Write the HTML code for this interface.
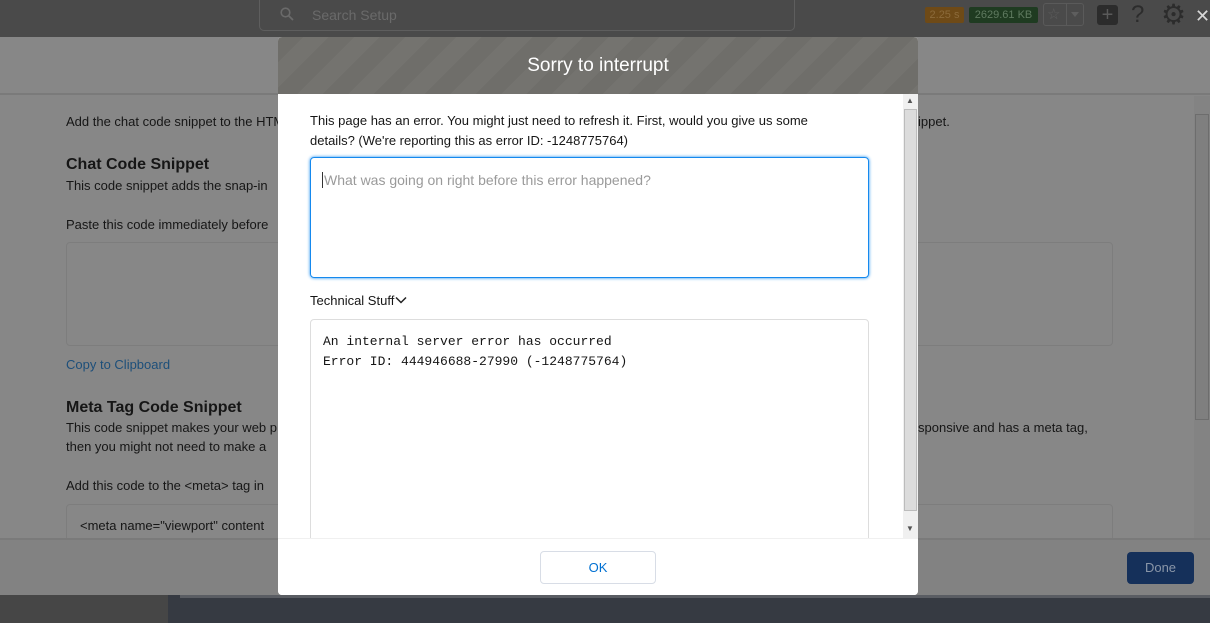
<!DOCTYPE html>
<html><head><meta charset="utf-8"><style>
*{box-sizing:border-box;margin:0;padding:0}
body{width:1210px;height:623px;overflow:hidden;position:relative;background:#878787;font-family:"Liberation Sans",sans-serif;font-size:13px;color:#161616}
.abs{position:absolute}
.top{left:0;top:0;width:1210px;height:37px;background:#4a4a4a}
.search{left:259px;top:0;width:536px;height:31px;border:1px solid #5e5e5e;border-top:none;border-radius:0 0 5px 5px;color:#6a6a6a;font-size:14px;padding:7px 0 0 52px}
.hdr{left:0;top:37px;width:1210px;height:58px;background:#878787;border-bottom:2px solid #7a7a7a}
.t{position:absolute;white-space:nowrap}
.box{position:absolute;border:1px solid #7d7d7d;border-radius:4px}
.foot{left:0;top:538px;width:1210px;height:57px;background:#828282;border-top:2px solid #7a7a7a}
.modal{left:278px;top:37px;width:640px;height:558px;background:#fff;border-radius:4px;overflow:hidden}
.mh{left:0;top:0;width:640px;height:57px;background:repeating-linear-gradient(135deg,#6f6e6a 0 18px,#74736f 18px 36px);color:#fff;font-size:19px;text-align:center;line-height:58px}
</style></head><body>
<div class="abs top"></div>
<div class="abs search"><svg class="abs" style="left:20px;top:7px" width="14" height="14" viewBox="0 0 14 14"><circle cx="5.5" cy="5.5" r="4.3" fill="none" stroke="#6a6a6a" stroke-width="1.6"/><path d="M8.7 8.7L13 13" stroke="#6a6a6a" stroke-width="1.8"/></svg>Search Setup</div>
<div class="abs" style="left:925px;top:7px;width:39px;height:16px;background:#6e4a17;border-radius:2px;color:#8b6a3a;font-size:11px;text-align:center;line-height:16px">2.25 s</div>
<div class="abs" style="left:969px;top:7px;width:69px;height:16px;background:#1f3b21;border-radius:2px;color:#5f7a60;font-size:11px;text-align:center;line-height:16px">2629.61 KB</div>
<div class="abs" style="left:1043px;top:3px;width:41px;height:23px;border:1px solid #5a5a5a;border-radius:3px"><span class="abs" style="left:3px;top:1px;color:#5e5e5e;font-size:15px">☆</span><span class="abs" style="left:22px;top:0;width:1px;height:21px;background:#5a5a5a"></span><span class="abs" style="left:27px;top:8px;border:4px solid transparent;border-top:5px solid #5e5e5e"></span></div>
<div class="abs" style="left:1097px;top:5px;width:21px;height:20px;background:#2c2c2c;border-radius:3px;color:#5a5a5a;font-size:20px;text-align:center;line-height:20px">+</div>
<div class="abs" style="left:1131px;top:1px;color:#2c2c2c;font-size:24px">?</div>
<div class="abs" style="left:1161px;top:-2px;color:#2c2c2c;font-size:28px;font-family:'DejaVu Sans',sans-serif">⚙</div>
<div class="abs" style="left:1195px;top:6px;color:#d8d8d8;font-size:18px">✕</div>
<div class="abs hdr"></div>
<div class="t" style="left:66px;top:114px">Add the chat code snippet to the HTML</div>
<div class="t" style="left:918px;top:114px">ippet.</div>
<div class="t" style="left:66px;top:156px;font-size:16px;font-weight:bold">Chat Code Snippet</div>
<div class="t" style="left:66px;top:178px">This code snippet adds the snap-in</div>
<div class="t" style="left:66px;top:217px">Paste this code immediately before</div>
<div class="box" style="left:66px;top:242px;width:1047px;height:104px"></div>
<div class="t" style="left:66px;top:357px;color:#1d4f7a">Copy to Clipboard</div>
<div class="t" style="left:66px;top:399px;font-size:16px;font-weight:bold">Meta Tag Code Snippet</div>
<div class="t" style="left:66px;top:420px">This code snippet makes your web p</div>
<div class="t" style="left:918px;top:420px">sponsive and has a meta tag,</div>
<div class="t" style="left:66px;top:439px">then you might not need to make a</div>
<div class="t" style="left:66px;top:478px">Add this code to the &lt;meta&gt; tag in</div>
<div class="box" style="left:66px;top:504px;width:1047px;height:60px;padding:13px 0 0 13px">&lt;meta name="viewport" content</div>
<div class="abs" style="left:1194px;top:96px;width:16px;height:442px;background:#838383"><div class="abs" style="left:1px;top:18px;width:14px;height:306px;background:#7f7f7f;border:1px solid #6d6d6d"></div></div>
<div class="abs foot"><div class="abs" style="left:1127px;top:12px;width:67px;height:32px;background:#15305a;border-radius:4px;color:#8a96a8;text-align:center;line-height:32px">Done</div></div>
<div class="abs" style="left:0;top:595px;width:168px;height:28px;background:#464646"></div>
<div class="abs" style="left:168px;top:595px;width:1042px;height:28px;background:#363a42"></div>
<div class="abs" style="left:180px;top:595px;width:1030px;height:3px;background:#5a5d63"></div>
<div class="abs modal">
<div class="abs mh">Sorry to interrupt</div>
<div class="t" style="left:32px;top:74px;line-height:20px">This page has an error. You might just need to refresh it. First, would you give us some<br>details? (We're reporting this as error ID: -1248775764)</div>
<div class="abs" style="left:32px;top:120px;width:559px;height:121px;border:1px solid #1589ee;border-radius:4px;box-shadow:0 0 3px #1589ee;color:#9a9a9a;font-size:14px;padding:14px 0 0 11px"><span style="border-left:1px solid #333;padding-left:1px">What was going on right before this error happened?</span></div>
<div class="t" style="left:32px;top:256px">Technical Stuff<svg width="12" height="9" viewBox="0 0 12 9" style="margin-left:1px"><path d="M1 1.5L6 6.5L11 1.5" fill="none" stroke="#222" stroke-width="1.5"/></svg></div>
<div class="abs" style="left:32px;top:282px;width:559px;height:230px;border:1px solid #ddd;border-radius:4px;font-family:'Liberation Mono',monospace;font-size:13px;padding:12px 0 0 12px;line-height:20px">An internal server error has occurred<br>Error ID: 444946688-27990 (-1248775764)</div>
<div class="abs" style="left:625px;top:57px;width:15px;height:444px;background:#f0f0f0"><div class="abs" style="left:1px;top:15px;width:13px;height:402px;background:#dcdcdc;border:1px solid #bcbcbc"></div><div class="abs" style="left:3px;top:2px;font-size:8px;color:#555">▲</div><div class="abs" style="left:3px;top:430px;font-size:8px;color:#555">▼</div></div>
<div class="abs" style="left:0;top:501px;width:640px;height:57px;background:#fff;border-top:1px solid #f0f0f0"><div class="abs" style="left:262px;top:12px;width:116px;height:33px;border:1px solid #d8dde6;border-radius:4px;color:#0070d2;text-align:center;line-height:31px">OK</div></div>
</div>
</body></html>
